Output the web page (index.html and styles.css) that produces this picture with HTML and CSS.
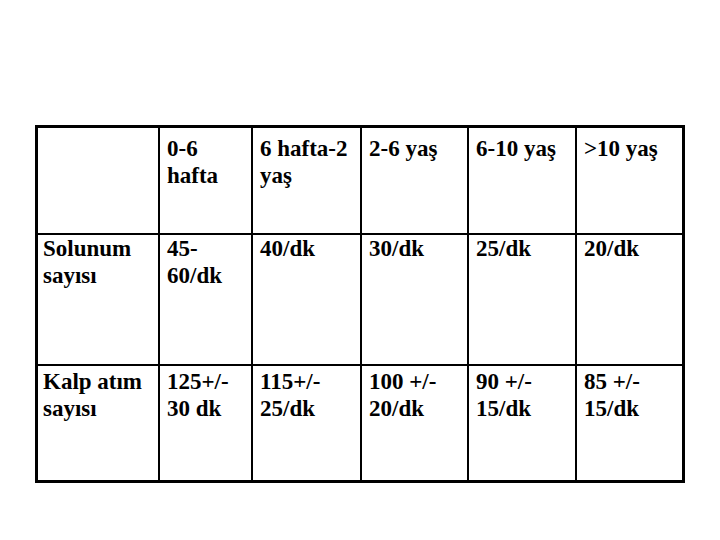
FILE: index.html
```html
<!DOCTYPE html>
<html lang="tr">
<head>
<meta charset="utf-8">
<title>Tablo</title>
<link rel="stylesheet" href="styles.css">
</head>
<body>
<div class="page">
  <div class="grid">
    <div class="cell head first"></div>
    <div class="cell head">0-6<br>hafta</div>
    <div class="cell head">6 hafta-2<br>yaş</div>
    <div class="cell head">2-6 yaş</div>
    <div class="cell head">6-10 yaş</div>
    <div class="cell head">&gt;10 yaş</div>

    <div class="cell r2 first">Solunum<br>sayısı</div>
    <div class="cell r2">45-<br>60/dk</div>
    <div class="cell r2">40/dk</div>
    <div class="cell r2">30/dk</div>
    <div class="cell r2">25/dk</div>
    <div class="cell r2">20/dk</div>

    <div class="cell r3 first">Kalp atım<br>sayısı</div>
    <div class="cell r3">125+/-<br>30 dk</div>
    <div class="cell r3">115+/-<br>25/dk</div>
    <div class="cell r3">100 +/-<br>20/dk</div>
    <div class="cell r3">90 +/-<br>15/dk</div>
    <div class="cell r3">85 +/-<br>15/dk</div>
  </div>
</div>
</body>
</html>
```

FILE: styles.css
```css
html, body {
  margin: 0;
  padding: 0;
  background: #ffffff;
  font-family: "Liberation Serif", serif;
}

.page {
  width: 720px;
  height: 540px;
  padding: 125px 0 0 35px;
  box-sizing: border-box;
}

.grid {
  display: grid;
  width: 650px;
  box-sizing: border-box;
  grid-template-columns: 120px 91px 107px 105px 106px 105px;
  grid-template-rows: 105px 129px 114px;
  gap: 2px;
  padding: 3px;
  background: #000000;
}

.cell {
  background: #ffffff;
  color: #000000;
  font-family: "Liberation Serif", serif;
  font-weight: bold;
  font-size: 23px;
  line-height: 27px;
  padding-left: 7px;
  white-space: nowrap;
}

.cell.first {
  padding-left: 5px;
}

.head {
  padding-top: 7px;
}

.r2 {
  padding-top: 0;
}

.r3 {
  padding-top: 2px;
}
```
